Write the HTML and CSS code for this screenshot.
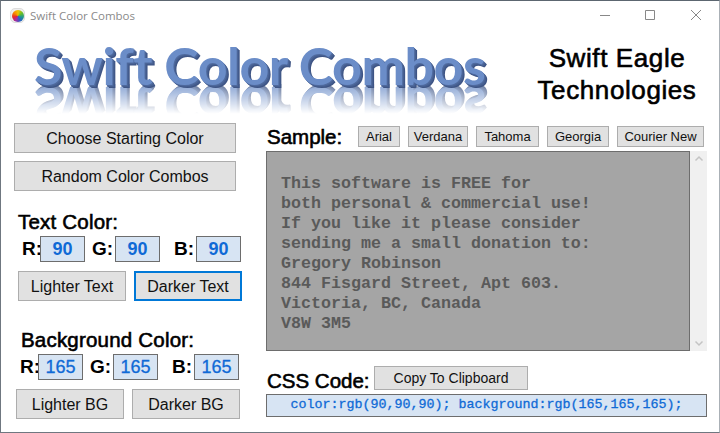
FILE: index.html
```html
<!DOCTYPE html>
<html lang="en">
<head>
  <meta charset="UTF-8" />
  <title>Swift Color Combos</title>
  <link rel="stylesheet" href="styles.css">
</head>
<body>
  <div class="window">
    <div class="titlebar">
      <span class="app-icon"><span class="wheel"></span></span>
      <span class="app-title">Swift Color Combos</span>
      <div class="win-controls">
        <svg width="46" height="29" viewBox="0 0 46 29"><path d="M18 14.500h10" stroke="#888" fill="none"/></svg>
        <svg width="46" height="29" viewBox="0 0 46 29"><path d="M17.500 9.500h9v9h-9z" stroke="#888" fill="none"/></svg>
        <svg width="46" height="29" viewBox="0 0 46 29"><path d="M17 9l10 10M27 9l-10 10" stroke="#888" fill="none"/></svg>
      </div>
    </div>

    <div class="header">
      <div class="logo">Swift Color Combos</div>
      <div class="company">Swift Eagle<br>Technologies</div>
    </div>

    <div class="main">
      <div class="left">
        <button class="btn wide">Choose Starting Color</button>
        <button class="btn wide">Random Color Combos</button>

        <div class="group text-group">
          <div class="label">Text Color:</div>
          <div class="rgb-row">
            <span class="ch ch-r">R:</span><span class="val">90</span>
            <span class="ch ch-g">G:</span><span class="val">90</span>
            <span class="ch ch-b">B:</span><span class="val">90</span>
          </div>
          <div class="btn-row">
            <button class="btn half">Lighter Text</button>
            <button class="btn half focused">Darker Text</button>
          </div>
        </div>

        <div class="group bg-group">
          <div class="label">Background Color:</div>
          <div class="rgb-row">
            <span class="ch ch-r">R:</span><span class="val">165</span>
            <span class="ch ch-g">G:</span><span class="val">165</span>
            <span class="ch ch-b">B:</span><span class="val">165</span>
          </div>
          <div class="btn-row">
            <button class="btn half">Lighter BG</button>
            <button class="btn half">Darker BG</button>
          </div>
        </div>
      </div>

      <div class="right">
        <div class="sample-head">
          <div class="label">Sample:</div>
          <div class="fonts">
            <button class="btn small f-arial">Arial</button>
            <button class="btn small f-verdana">Verdana</button>
            <button class="btn small f-tahoma">Tahoma</button>
            <button class="btn small f-georgia">Georgia</button>
            <button class="btn small f-courier">Courier New</button>
          </div>
        </div>

        <div class="sample-wrap">
          <div class="sample">This software is FREE for
both personal &amp; commercial use!
If you like it please consider
sending me a small donation to:
Gregory Robinson
844 Fisgard Street, Apt 603.
Victoria, BC, Canada
V8W 3M5</div>
          <div class="scrollbar">
            <svg width="16" height="16" viewBox="0 0 16 16"><path d="M4.500 9.500L8 6l3.500 3.500" stroke="#c4c4c4" stroke-width="1.500" fill="none"/></svg>
            <svg width="16" height="16" viewBox="0 0 16 16"><path d="M4.500 6.500L8 10l3.500-3.500" stroke="#c4c4c4" stroke-width="1.500" fill="none"/></svg>
          </div>
        </div>

        <div class="css-head">
          <div class="label">CSS Code:</div>
          <button class="btn copy">Copy To Clipboard</button>
        </div>
        <div class="css-output">color:rgb(90,90,90); background:rgb(165,165,165);</div>
      </div>
    </div>
  </div>
</body>
</html>
```

FILE: styles.css
```css
html, body { height: 100%; }
body {
  margin: 0;
  background: #fff;
  font-family: "Liberation Sans", Arial, sans-serif;
  color: #000;
}
.window {
  width: 720px;
  height: 433px;
  box-sizing: border-box;
  border: 1px solid #6f7780;
  border-top-color: #5c6670;
  border-right-color: #aab0b6;
  overflow: hidden;
  display: flex;
  flex-direction: column;
}

/* title bar */
.titlebar {
  height: 29px;
  flex: none;
  display: flex;
  align-items: center;
  padding-left: 9px;
}
.app-icon {
  width: 15px;
  height: 15px;
  border-radius: 5px;
  background: #eee;
  border: 1px solid #ddd;
  box-sizing: border-box;
  display: flex;
  align-items: center;
  justify-content: center;
}
.wheel {
  width: 12px;
  height: 12px;
  border-radius: 50%;
  background: conic-gradient(#f2c200, #6cc024, #1f9a8c, #2a5fc4, #a02ea8, #e8262c, #f58a00, #f2c200);
}
.app-title {
  margin-left: 5px;
  font-family: "Open Sans", sans-serif;
  font-size: 11.5px;
  color: #8a8a8a;
}
.win-controls {
  margin-left: auto;
  display: flex;
  margin-right: -1px;
}

/* header */
.header {
  height: 93px;
  flex: none;
  display: flex;
}
.logo {
  width: 514px;
  flex: none;
  padding: 6px 0 0 33px;
  box-sizing: border-box;
  font-family: Lato, sans-serif;
  font-weight: 700;
  font-size: 52px;
  line-height: 58px;
  height: 64px;
  white-space: nowrap;
  letter-spacing: -.5px;
  color: #6b8dc8;
  text-shadow: 1px 1px 0 #4f6a9e, 2px 2px 0 #465f90, 3px 3px 0 #3e5484;
  -webkit-box-reflect: below -16px linear-gradient(transparent 44%, rgba(255,255,255,.7) 85%);
}
.company {
  width: 204px;
  flex: none;
  padding-top: 12px;
  font-size: 26px;
  line-height: 32px;
  letter-spacing: .6px;
  text-align: center;
  white-space: nowrap;
  -webkit-text-stroke: .6px #000;
}

/* main area */
.main {
  flex: 1;
  display: flex;
  padding-left: 13px;
}
.left {
  width: 252px;
  flex: none;
}
.right {
  width: 441px;
  flex: none;
  padding-top: 3px;
}

.btn {
  box-sizing: border-box;
  background: #e1e1e1;
  border: 1px solid #adadad;
  padding: 1px 0 0;
  font-family: "Liberation Sans", Arial, sans-serif;
  font-size: 16px;
  color: #111;
}
.wide {
  display: block;
  width: 222px;
  height: 30px;
  margin-bottom: 8px;
}
.label {
  font-size: 20.5px;
  line-height: 22px;
  white-space: nowrap;
  -webkit-text-stroke: .6px #000;
}
.left .label { letter-spacing: .2px; }

.text-group { padding-left: 4px; margin-top: 20px; }
.bg-group { padding-left: 2px; margin-top: 28px; }
.bg-group .label { padding-left: 5px; }
.text-group .rgb-row { padding-left: 4px; }

.rgb-row {
  display: flex;
  height: 26px;
  margin-top: 3px;
  align-items: center;
  font-size: 19px;
}
.bg-group .rgb-row { padding-left: 4px; }
.ch {
  font-weight: 700;
  white-space: nowrap;
}
.ch-r { width: 18px; }
.ch-g { width: 23px; margin-left: 7px; }
.ch-b { width: 22px; margin-left: 14px; }
.val {
  width: 45px;
  height: 26px;
  box-sizing: border-box;
  border: 1px solid #6d6d6d;
  background: #d7e4f3;
  color: #0f6ad6;
  font-size: 18px;
  line-height: 24px;
  text-align: center;
  -webkit-text-stroke: .3px #0f6ad6;
}
.text-group .val { font-weight: 700; -webkit-text-stroke: 0; }

.btn-row {
  display: flex;
  gap: 8px;
  margin-top: 9px;
}
.half {
  width: 108px;
  height: 30px;
}
.focused {
  border: 2px solid #0078d7;
}

/* right side */
.sample-head {
  display: flex;
  align-items: flex-start;
  height: 25px;
}
.sample-head .label {
  width: 92px;
  padding-left: 1px;
  box-sizing: border-box;
}
.fonts {
  display: flex;
  gap: 8px;
}
.small {
  height: 21px;
  padding: 0;
  font-size: 13px;
}
.f-arial { width: 42px; }
.f-verdana { width: 60px; }
.f-tahoma { width: 63px; }
.f-georgia { width: 62px; }
.f-courier { width: 87px; }

.sample-wrap {
  display: flex;
  height: 200px;
}
.sample {
  width: 424px;
  box-sizing: border-box;
  border: 1px solid #6d6d6d;
  background: #a5a5a5;
  color: #5a5a5a;
  padding: 22px 14px 0;
  font-family: "Liberation Mono", "Courier New", monospace;
  font-weight: 700;
  font-size: 16.67px;
  line-height: 20px;
  white-space: pre;
}
.scrollbar {
  width: 17px;
  background: #f0f0f0;
  display: flex;
  flex-direction: column;
  justify-content: space-between;
  align-items: center;
}

.css-head {
  display: flex;
  align-items: flex-start;
  margin-top: 15px;
  height: 28px;
}
.css-head .label {
  width: 108px;
  padding: 4px 0 0 1px;
  box-sizing: border-box;
}
.copy {
  width: 154px;
  height: 24px;
  padding: 0;
  font-size: 14px;
}
.css-output {
  width: 441px;
  height: 23px;
  box-sizing: border-box;
  border: 1px solid #6d6d6d;
  background: #d7e4f3;
  color: #0f6ad6;
  font-family: "Liberation Mono", "Courier New", monospace;
  font-size: 13.33px;
  line-height: 19px;
  text-align: center;
  white-space: pre;
  -webkit-text-stroke: .3px #0f6ad6;
}
```
